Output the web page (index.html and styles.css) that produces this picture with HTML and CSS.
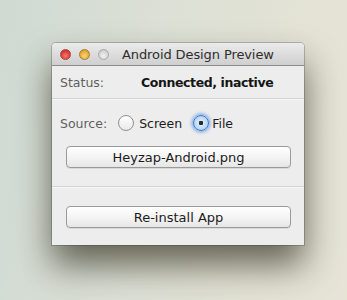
FILE: index.html
```html
<!DOCTYPE html>
<html lang="en">
<head>
    <meta charset="UTF-8">
    <title>Android Design Preview</title>
    <link rel="stylesheet" href="styles.css">
</head>
<body>
    <div class="desktop">
        <div class="window">
            <div class="titlebar">
                <span class="light close"></span>
                <span class="light minimize"></span>
                <span class="light zoom"></span>
                <span class="title">Android Design Preview</span>
            </div>
            <div class="row status-row">
                <span class="label">Status:</span>
                <span class="status-value">Connected, inactive</span>
            </div>
            <div class="separator"></div>
            <div class="row source-row">
                <span class="label">Source:</span>
                <span class="radio"></span>
                <span class="option">Screen</span>
                <span class="radio checked"></span>
                <span class="option">File</span>
            </div>
            <button class="button">Heyzap-Android.png</button>
            <div class="separator lower"></div>
            <button class="button reinstall">Re-install App</button>
        </div>
    </div>
</body>
</html>
```

FILE: styles.css
```css
body {
    margin: 0;
    font-family: "DejaVu Sans", "Liberation Sans", sans-serif;
}
.desktop {
    width: 347px;
    height: 300px;
    padding: 43px 0 0 52px;
    box-sizing: border-box;
    background: linear-gradient(100deg, #cfdad3 0%, #dde0d5 45%, #e7e4d6 100%);
}
.window {
    width: 252px;
    height: 202px;
    background-color: #ededed;
    border-radius: 4px 4px 0 0;
    box-shadow: 0 20px 34px rgba(35,32,15,0.65), 0 0 0 1px rgba(0,0,0,0.2);
    display: flex;
    flex-direction: column;
}
.titlebar {
    height: 22px;
    display: flex;
    align-items: center;
    padding-left: 8px;
    background: linear-gradient(#ebebeb, #cfcfcf);
    border-bottom: 1px solid #8c8c8c;
    border-radius: 4px 4px 0 0;
}
.light {
    width: 11px;
    height: 11px;
    border-radius: 50%;
    margin-right: 8px;
    box-sizing: border-box;
}
.close {
    background: radial-gradient(circle at 50% 65%, #f27a74, #d8322c 70%);
    border: 1px solid #a8423a;
}
.minimize {
    background: radial-gradient(circle at 50% 65%, #f6d77e, #e2a52a 70%);
    border: 1px solid #a67c2c;
}
.zoom {
    background: radial-gradient(circle at 50% 65%, #f2f2f2, #cfcfcf 70%);
    border: 1px solid #a8a8a8;
}
.title {
    margin-left: 5px;
    font-size: 13px;
    letter-spacing: -0.1px;
    color: #2e2e2e;
}
.row {
    display: flex;
    align-items: center;
    padding-left: 8px;
    font-size: 12.5px;
}
.status-row {
    height: 32px;
}
.label {
    color: #5f5f5f;
}
.status-value {
    margin-left: 37px;
    font-weight: bold;
    letter-spacing: -0.4px;
    color: #151515;
}
.separator {
    height: 1px;
    background-color: #d2d2d2;
    border-bottom: 1px solid #f7f7f7;
}
.source-row {
    height: 44px;
    padding-top: 1px;
}
.source-row .label {
    margin-right: 11px;
}
.radio {
    width: 16px;
    height: 16px;
    border-radius: 50%;
    box-sizing: border-box;
    border: 1px solid #8e8e8e;
    background: linear-gradient(#ffffff, #e9e9e9);
    margin-right: 5px;
}
.radio.checked {
    border-color: #3e78c4;
    background: radial-gradient(circle, #2a2a2a 0 2px, #d7e8fa 2.5px, #9bc5ef 100%);
    box-shadow: 0 0 3px 2px rgba(90,150,230,0.6);
    margin-right: 3px;
}
.option {
    color: #1c1c1c;
    margin-right: 11px;
}
.button {
    display: block;
    width: 225px;
    height: 22px;
    margin: 1px 0 0 14px;
    padding: 0;
    font-family: inherit;
    font-size: 13px;
    color: #1c1c1c;
    border: 1px solid #9a9a9a;
    border-radius: 4px;
    background: linear-gradient(#ffffff, #f2f2f2 60%, #e6e6e6);
    box-shadow: 0 1px 0 rgba(0,0,0,0.08);
}
.separator.lower {
    margin-top: 18px;
}
.button.reinstall {
    margin-top: 18px;
}
```
